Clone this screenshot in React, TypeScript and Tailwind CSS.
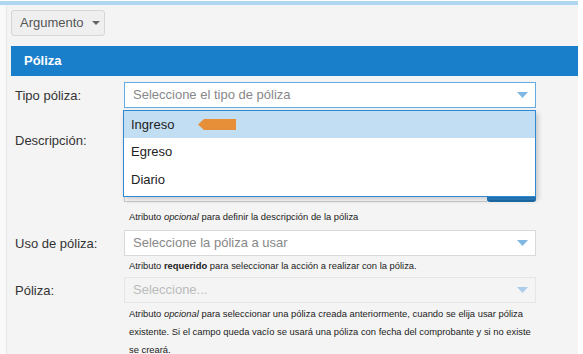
import React from 'react';

const Caret = ({ color = '#7fb8e3', w = 11, h = 6 }: { color?: string; w?: number; h?: number }) => (
  <svg width={w} height={h} viewBox={`0 0 ${w} ${h}`} className="shrink-0">
    <path d={`M0 0 H${w} L${w / 2} ${h} Z`} fill={color} />
  </svg>
);

function Row({ label, children }: { label: string; children: React.ReactNode }) {
  return (
    <div className="flex">
      <div className="w-[113px] shrink-0 pl-[4px] pt-[4px] text-[13px] text-[#333]">{label}</div>
      <div className="w-[412px] shrink-0">{children}</div>
    </div>
  );
}

function Help({ children }: { children: React.ReactNode }) {
  return <div className="pl-[5px] text-[9.4px] leading-[18px] text-[#222] whitespace-nowrap">{children}</div>;
}

export default function App() {
  return (
    <div
      className="w-[583px] h-[354px] overflow-hidden bg-white"
      style={{ fontFamily: '"Liberation Sans", Arial, sans-serif' }}
    >
      <div className="mt-px h-[4px] w-[578px] bg-[#b0d5ef]" />
      <div className="flex w-[578px] h-[349px]">
        <div className="w-[7px] shrink-0 bg-[#f9f9f9] border-r border-[#e6e6e6]" />
        <div className="flex-1 bg-[#f4f4f4] pl-[4px]">
          {/* toolbar */}
          <div className="pt-[5px] h-[41px]">
            <button className="flex items-center gap-[8px] h-[26px] w-[94px] pl-[8px] rounded-[3px] border border-[#d6d6d6] bg-[#efefef] text-[13px] text-[#555]">
              <span>Argumento</span>
              <Caret color="#666" w={8} h={4} />
            </button>
          </div>

          {/* header */}
          <div className="h-[30px] bg-[#1a7fcb] flex items-center pl-[13px] text-[13px] font-bold text-white">
            Póliza
          </div>

          <div className="pt-[6px]">
            {/* Tipo poliza */}
            <Row label="Tipo póliza:">
              <div className="relative">
                <div className="h-[26px] flex items-center justify-between pl-[8px] pr-[7px] border border-[#62abe2] bg-white text-[13px] text-[#888]">
                  <span>Seleccione el tipo de póliza</span>
                  <Caret />
                </div>
                {/* dropdown list */}
                <div className="absolute left-[-1px] top-[28px] w-[413px] z-10 border border-[#2f8ad3] bg-white shadow-[2px_3px_5px_rgba(0,0,0,0.2)] text-[13px] text-[#222]">
                  <div className="relative h-[27px] bg-[#c2def2] flex items-center pl-[7px]">
                    Ingreso
                    <svg width="38" height="11" viewBox="0 0 38 11" className="absolute left-[74px] top-[8px]">
                      <path d="M0 5.5 L6 0 H38 V11 H6 Z" fill="#e68f38" />
                    </svg>
                  </div>
                  <div className="h-[28px] flex items-center pl-[7px]">Egreso</div>
                  <div className="h-[30px] flex items-center pl-[7px] pb-[2px]">Diario</div>
                </div>
              </div>
            </Row>

            {/* Descripcion */}
            <div className="mt-[19px]">
              <Row label="Descripción:">
                <div className="flex items-end h-[75px]">
                  <div className="flex-1 h-full bg-white border border-[#ccc] border-r-0" />
                  <div className="w-[49px] h-[14px] bg-[#2a84cc] rounded-b-[3px] border-b-2 border-[#1e6fae]" />
                </div>
                <div className="pt-[6px]">
                  <Help>
                    Atributo <i>opcional</i> para definir la descripción de la póliza
                  </Help>
                </div>
              </Row>
            </div>

            {/* Uso de poliza */}
            <div className="mt-[4px]">
              <Row label="Uso de póliza:">
                <div className="h-[26px] flex items-center justify-between pl-[8px] pr-[7px] border border-[#d9d9d9] bg-white text-[13px] text-[#888]">
                  <span>Seleccione la póliza a usar</span>
                  <Caret />
                </div>
                <div className="pt-[1px]">
                  <Help>
                    Atributo <b>requerido</b> para seleccionar la acción a realizar con la póliza.
                  </Help>
                </div>
              </Row>
            </div>

            {/* Poliza */}
            <div className="mt-[2px]">
              <Row label="Póliza:">
                <div className="h-[26px] flex items-center justify-between pl-[8px] pr-[7px] border border-[#e6e6e6] bg-[#f4f4f4] text-[13px] text-[#bbb]">
                  <span>Seleccione...</span>
                  <Caret color="#a9cdea" />
                </div>
                <div className="pt-[2px]">
                  <Help>
                    Atributo <i>opcional</i> para seleccionar una póliza creada anteriormente, cuando se elija usar póliza
                    <br />
                    existente. Si el campo queda vacío se usará una póliza con fecha del comprobante y si no existe
                    <br />
                    se creará.
                  </Help>
                </div>
              </Row>
            </div>
          </div>
        </div>
      </div>
    </div>
  );
}
